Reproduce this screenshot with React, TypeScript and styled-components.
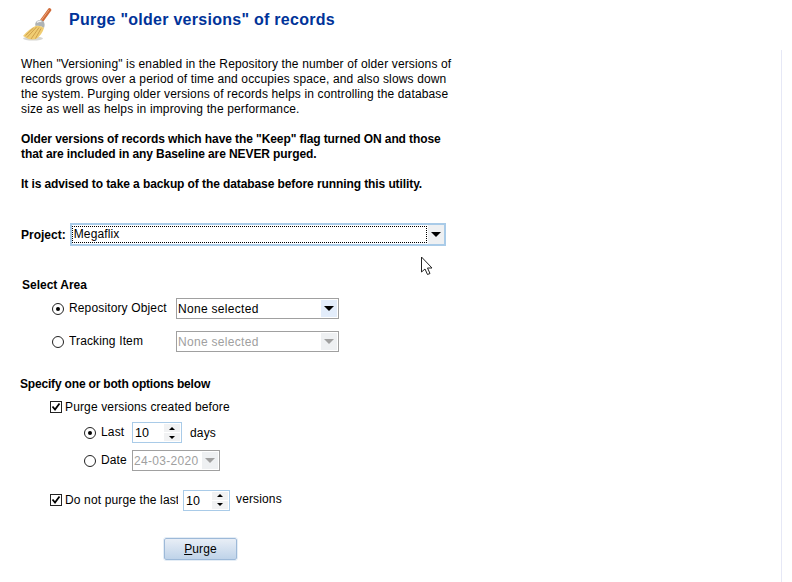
import React from 'react'
import styled, { createGlobalStyle } from 'styled-components'

const GlobalStyle = createGlobalStyle`
    html, body {
        margin: 0;
        padding: 0;
        background: #fff;
    }
    body {
        font-family: 'Liberation Sans', Arial, sans-serif;
        font-size: 12px;
        letter-spacing: 0.14px;
        color: #000;
    }
`
const Page = styled.div`
    position: relative;
    display: flex;
    width: 792px;
    height: 582px;
    overflow: hidden;
`
const Main = styled.div`
    width: 781px;
    padding: 8px 0 0 0;
    box-sizing: border-box;
`
const SideRule = styled.div`
    width: 1px;
    margin-top: 50px;
    background: #e6e8f6;
`
const Header = styled.div`
    display: flex;
    align-items: flex-start;
    height: 40px;
    padding-left: 22px;
`
const Title = styled.h1`
    margin: 3px 0 0 15px;
    font-size: 16px;
    line-height: 18px;
    font-weight: bold;
    letter-spacing: 0.27px;
    color: #003399;
`
const Intro = styled.div`
    width: 440px;
    margin: 9px 0 0 21px;
    line-height: 15px;
`
const Para = styled.p`
    margin: 0 0 15px 0;
    white-space: nowrap;
`
const BoldPara = styled(Para)`
    font-weight: bold;
    letter-spacing: -0.09px;
`
const ProjectRow = styled.div`
    display: flex;
    align-items: center;
    margin: 31px 0 0 21px;
`
const BoldLabel = styled.span`
    font-weight: bold;
    letter-spacing: 0;
`
const ProjectBox = styled.div`
    display: flex;
    align-items: center;
    width: 376px;
    height: 23px;
    margin-left: 4px;
    border: 2px solid #a9cbe8;
    box-sizing: border-box;
`
const ProjectValue = styled.div`
    flex: 1;
    height: 17px;
    margin-right: 1px;
    padding-left: 1px;
    line-height: 15px;
    border: 1px dotted #000;
    box-sizing: border-box;
    background: #fff;
`
const ArrowButton = styled.div<{ $disabled?: boolean; $bg?: string }>`
    display: flex;
    align-items: center;
    justify-content: center;
    width: 16px;
    height: 100%;
    background: ${(props) => props.$bg ?? '#eef0f2'};

    &::after {
        content: '';
        border-style: solid;
        border-width: 5px 5px 0 5px;
        border-color: ${(props) => props.$disabled ? '#a0a0a0' : '#000'} transparent transparent transparent;
    }
`
const SectionTitle = styled.div<{ $left: number; $top: number; $spacing?: number }>`
    margin: ${(props) => props.$top}px 0 0 ${(props) => props.$left}px;
    font-weight: bold;
    line-height: 15px;
    letter-spacing: ${(props) => props.$spacing ?? 0}px;
`
const AreaRow = styled.div<{ $top: number }>`
    display: flex;
    align-items: center;
    margin: ${(props) => props.$top}px 0 0 52px;
    height: 21px;
`
const RadioCircle = styled.span<{ $on?: boolean }>`
    display: inline-flex;
    align-items: center;
    justify-content: center;
    flex: none;
    width: 12px;
    height: 12px;
    border: 1px solid #222;
    border-radius: 50%;
    box-sizing: border-box;
    background: #fff;

    &::after {
        content: '';
        display: ${(props) => props.$on ? 'block' : 'none'};
        width: 4px;
        height: 4px;
        border-radius: 50%;
        background: #000;
    }
`
const FieldLabel = styled.span<{ $width: number; $left?: number; $lift?: number }>`
    flex: none;
    width: ${(props) => props.$width}px;
    margin-top: ${(props) => -(props.$lift ?? 2)}px;
    margin-left: ${(props) => props.$left ?? 5}px;
    white-space: nowrap;
    overflow: hidden;
`
const SelectBox = styled.div<{ $disabled?: boolean; $width: number }>`
    display: flex;
    align-items: center;
    width: ${(props) => props.$width}px;
    height: 21px;
    padding: 1px;
    border: 1px solid #a0a0a0;
    box-sizing: border-box;
    letter-spacing: 0.3px;
    color: ${(props) => props.$disabled ? '#a0a0a0' : '#000'};
    background: #fff;
`
const SelectText = styled.span`
    flex: 1;
    white-space: nowrap;
`
const CheckRow = styled.div<{ $top: number }>`
    display: flex;
    align-items: center;
    height: 20px;
    margin: ${(props) => props.$top}px 0 0 50px;
`
const CheckBox = styled.span`
    display: inline-flex;
    flex: none;
    width: 12px;
    height: 12px;
    margin-right: 3px;
    border: 1px solid #222;
    box-sizing: border-box;
    background: #fff;
`
const DateRow = styled.div<{ $top: number }>`
    display: flex;
    align-items: center;
    height: 21px;
    margin: ${(props) => props.$top}px 0 0 84px;
`
const Spinner = styled.div<{ $width: number; $left?: number }>`
    display: flex;
    flex: none;
    width: ${(props) => props.$width}px;
    height: 21px;
    margin-left: ${(props) => props.$left ?? 0}px;
    padding: 1px;
    border: 1px solid #a9cbe8;
    box-sizing: border-box;
    background: #fff;
`
const SpinnerValue = styled.span`
    flex: 1;
    padding: 1px 0 0 1px;
    line-height: 17px;
    font-size: 12.5px;
`
const SpinnerButtons = styled.div`
    display: flex;
    flex-direction: column;
    gap: 1px;
    width: 16px;
`
const SpinnerStep = styled.div<{ $down?: boolean }>`
    flex: 1;
    display: flex;
    align-items: center;
    justify-content: center;
    background: #f1f2f3;

    &::after {
        content: '';
        border-style: solid;
        border-width: ${(props) => props.$down ? '3px 3px 0 3px' : '0 3px 3px 3px'};
        border-color: ${(props) => props.$down
            ? '#000 transparent transparent transparent'
            : 'transparent transparent #000 transparent'};
    }
`
const Suffix = styled.span<{ $left: number; $lift?: number }>`
    margin: ${(props) => -(props.$lift ?? 0)}px 0 0 ${(props) => props.$left}px;
`
const ButtonRow = styled.div`
    margin: 28px 0 0 164px;
`
const PurgeButton = styled.button`
    display: block;
    width: 73px;
    height: 22px;
    padding: 0;
    border: 1px solid #9db9d8;
    outline: 1px solid #e4edf6;
    border-radius: 2px;
    font-family: inherit;
    font-size: 12px;
    letter-spacing: 0.14px;
    color: #000;
    background: linear-gradient(#e8eef6, #bfd3e9);
`
const Cursor = styled.svg`
    position: absolute;
    left: 420px;
    top: 256px;
`

const CheckMark = () => (
    <svg width="10" height="10" viewBox="0 0 10 10">
        <path d="M1.5 4.5 L4 7.5 L8.5 1.5" fill="none" stroke="#000" strokeWidth="1.8" />
    </svg>
)

const Broom = () => (
    <svg width="32" height="33" viewBox="0 0 32 33">
        <ellipse cx="11" cy="30.5" rx="10" ry="2" fill="#d6d6d2" />
        <path d="M27.5 2 L19.5 13" stroke="#cf6a38" strokeWidth="3.6" strokeLinecap="round" />
        <path d="M27 1.8 L19.5 12" stroke="#eda67a" strokeWidth="1" />
        <path d="M13.5 18 Q12.5 15 15 13 Q18.5 11 21.5 13.5 Q23.5 16 22 20 Q18 17 13.5 18 Z" fill="#aeb3b5" />
        <path d="M15 14.5 Q17 12.5 19.5 13.5" stroke="#f2f2f2" strokeWidth="1.4" fill="none" />
        <path d="M13.5 18 Q7 21 1 28 Q7 32.5 14 31 Q20 27 22 20 Q18 17 13.5 18 Z" fill="#f0cd72" />
        <path d="M14.5 19 L5 29.5 M17 19.5 L9 31 M19 20.5 L13.5 30.5 M11.5 20 L3.5 27.5" stroke="#c99a48" strokeWidth="0.9" fill="none" />
    </svg>
)

export default function App() {
    return (
        <Page>
            <GlobalStyle />
            <Main>
                <Header>
                    <Broom />
                    <Title>Purge "older versions" of records</Title>
                </Header>
                <Intro>
                    <Para>
                        When "Versioning" is enabled in the Repository the number of older versions of<br />
                        records grows over a period of time and occupies space, and also slows down<br />
                        the system. Purging older versions of records helps in controlling the database<br />
                        size as well as helps in improving the performance.
                    </Para>
                    <BoldPara>
                        Older versions of records which have the "Keep" flag turned ON and those<br />
                        that are included in any Baseline are NEVER purged.
                    </BoldPara>
                    <BoldPara>It is advised to take a backup of the database before running this utility.</BoldPara>
                </Intro>
                <ProjectRow>
                    <BoldLabel>Project:</BoldLabel>
                    <ProjectBox>
                        <ProjectValue>Megaflix</ProjectValue>
                        <ArrowButton />
                    </ProjectBox>
                </ProjectRow>
                <SectionTitle $left={22} $top={32}>Select Area</SectionTitle>
                <AreaRow $top={5}>
                    <RadioCircle $on />
                    <FieldLabel $width={107}>Repository Object</FieldLabel>
                    <SelectBox $width={163}>
                        <SelectText>None selected</SelectText>
                        <ArrowButton $bg="#e3edfb" />
                    </SelectBox>
                </AreaRow>
                <AreaRow $top={12}>
                    <RadioCircle />
                    <FieldLabel $width={107}>Tracking Item</FieldLabel>
                    <SelectBox $width={163} $disabled>
                        <SelectText>None selected</SelectText>
                        <ArrowButton $disabled />
                    </SelectBox>
                </AreaRow>
                <SectionTitle $left={20} $top={25} $spacing={-0.18}>Specify one or both options below</SectionTitle>
                <CheckRow $top={5}>
                    <CheckBox><CheckMark /></CheckBox>
                    Purge versions created before
                </CheckRow>
                <DateRow $top={5}>
                    <RadioCircle $on />
                    <FieldLabel $width={31}>Last</FieldLabel>
                    <Spinner $width={50}>
                        <SpinnerValue>10</SpinnerValue>
                        <SpinnerButtons>
                            <SpinnerStep />
                            <SpinnerStep $down />
                        </SpinnerButtons>
                    </Spinner>
                    <Suffix $left={8}>days</Suffix>
                </DateRow>
                <DateRow $top={7}>
                    <RadioCircle />
                    <FieldLabel $width={31}>Date</FieldLabel>
                    <SelectBox $width={88} $disabled>
                        <SelectText>24-03-2020</SelectText>
                        <ArrowButton $disabled />
                    </SelectBox>
                </DateRow>
                <CheckRow $top={19}>
                    <CheckBox><CheckMark /></CheckBox>
                    <FieldLabel $width={113} $left={0} $lift={0}>Do not purge the last</FieldLabel>
                    <Spinner $width={47} $left={5}>
                        <SpinnerValue>10</SpinnerValue>
                        <SpinnerButtons>
                            <SpinnerStep />
                            <SpinnerStep $down />
                        </SpinnerButtons>
                    </Spinner>
                    <Suffix $left={6} $lift={2}>versions</Suffix>
                </CheckRow>
                <ButtonRow>
                    <PurgeButton><u>P</u>urge</PurgeButton>
                </ButtonRow>
            </Main>
            <SideRule />
            <Cursor width="13" height="20" viewBox="0 0 13 20">
                <path d="M1.5 1 L1.5 16 L5 13 L7.5 18.5 L10 17.5 L7.5 12 L12 12 Z" fill="#fff" stroke="#222" strokeWidth="1" />
            </Cursor>
        </Page>
    )
}
